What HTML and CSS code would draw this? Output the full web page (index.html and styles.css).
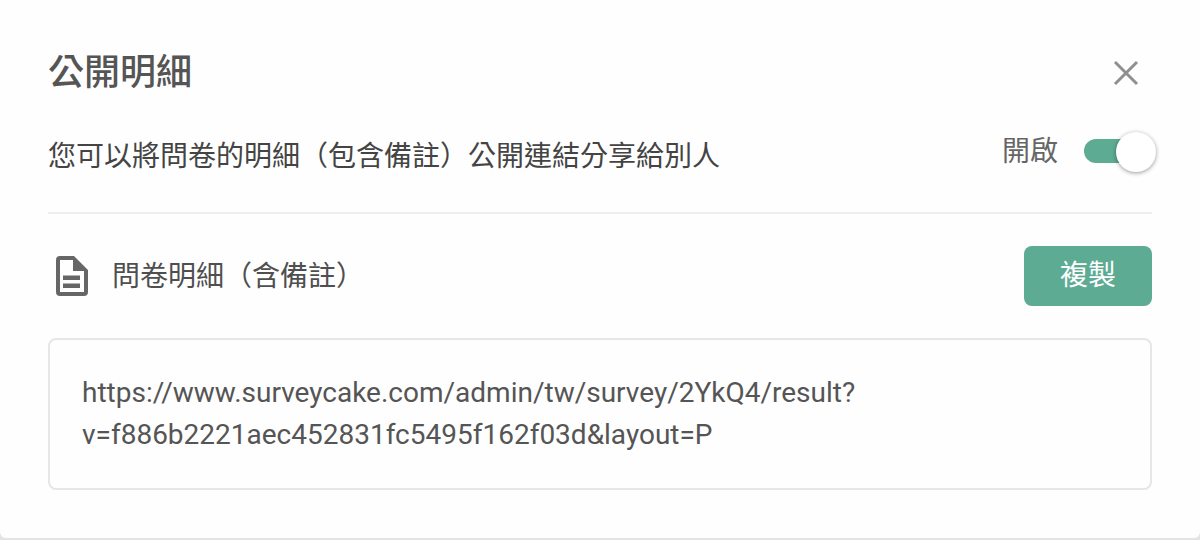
FILE: index.html
```html
<!DOCTYPE html>
<html lang="zh-Hant">
<head>
    <meta charset="UTF-8">
    <title>公開明細</title>
    <link rel="stylesheet" href="styles.css">
</head>
<body>
    <div class="modal">
        <!-- Header -->
        <div class="modal-header">
            <h2 class="modal-title">公開明細</h2>
            <svg class="close-icon" width="26" height="26" viewBox="0 0 26 26">
                <path d="M2 2 L24 24 M24 2 L2 24" stroke="#8f8f8f" stroke-width="3" fill="none"/>
            </svg>
        </div>

        <!-- Public switch -->
        <div class="switch-row">
            <div class="switch-text">您可以將問卷的明細（包含備註）公開連結分享給別人</div>
            <div class="switch-label">開啟</div>
            <div class="switch">
                <div class="switch-knob"></div>
            </div>
        </div>

        <!-- Link section -->
        <div class="link-row">
            <svg class="doc-icon" width="32" height="40" viewBox="0 0 32 40">
                <path fill-rule="evenodd" fill="#666" d="M4 0 H18 L32 14 V36 a4 4 0 0 1 -4 4 H4 a4 4 0 0 1 -4 -4 V4 a4 4 0 0 1 4 -4 Z M4 4 V36 H28 V15 H17 V4 Z"/>
                <path fill="#666" d="M7 19.5 H24 V24 H7 Z M7 27.5 H24 V32 H7 Z"/>
            </svg>
            <div class="link-title">問卷明細（含備註）</div>
            <button class="copy-btn">複製</button>
        </div>
        <div class="link-box">https://www.surveycake.com/admin/tw/survey/2YkQ4/result?<br>v=f886b2221aec452831fc5495f162f03d&amp;layout=P</div>
    </div>
</body>
</html>
```

FILE: styles.css
```css
html, body {
    margin: 0;
    padding: 0;
    height: 100%;
    background-color: #e3e3e3;
    overflow: hidden;
}

body {
    font-family: "Roboto", "Noto Sans CJK TC", sans-serif;
    color: #555;
}

.modal {
    box-sizing: border-box;
    width: 1200px;
    height: 538px;
    padding: 0 48px;
    background-color: #fefefe;
    border-radius: 0 0 6px 6px;
}

.modal-header {
    display: flex;
    justify-content: space-between;
    align-items: center;
    padding-top: 51px;
    height: 44px;
}

.modal-title {
    margin: 0;
    font-size: 36px;
    font-weight: 500;
    line-height: 44px;
    color: #555;
}

.close-icon {
    margin-right: 13px;
}

.switch-row {
    display: flex;
    align-items: center;
    height: 117px;
    border-bottom: 2px solid #eeeeee;
}

.switch-text {
    flex: 1;
    font-size: 28px;
    font-weight: 400;
    color: #444;
}

.switch-label {
    font-size: 28px;
    margin-right: 26px;
    padding-bottom: 9px;
    color: #666;
}

.switch {
    position: relative;
    width: 64px;
    height: 24px;
    margin-right: 4px;
    margin-bottom: 6px;
    border-radius: 12px;
    background-color: #5dab93;
}

.switch-knob {
    position: absolute;
    top: -7px;
    right: -8px;
    width: 40px;
    height: 40px;
    border-radius: 50%;
    background-color: #fff;
    box-shadow: 0 1px 4px rgba(0, 0, 0, 0.4);
}

.link-row {
    display: flex;
    align-items: center;
    margin-top: 32px;
}

.doc-icon {
    margin-left: 8px;
    margin-right: 24px;
}

.link-title {
    flex: 1;
    font-size: 28px;
    padding-bottom: 4px;
    color: #4f4f4f;
}

.copy-btn {
    width: 128px;
    height: 60px;
    padding: 0 0 6px;
    border: none;
    border-radius: 8px;
    background-color: #5dab93;
    color: #fff;
    font-family: inherit;
    font-size: 28px;
}

.link-box {
    box-sizing: border-box;
    height: 152px;
    margin-top: 32px;
    padding: 32px;
    border: 2px solid #e6e6e6;
    border-radius: 8px;
    font-size: 28px;
    line-height: 42px;
}
```
